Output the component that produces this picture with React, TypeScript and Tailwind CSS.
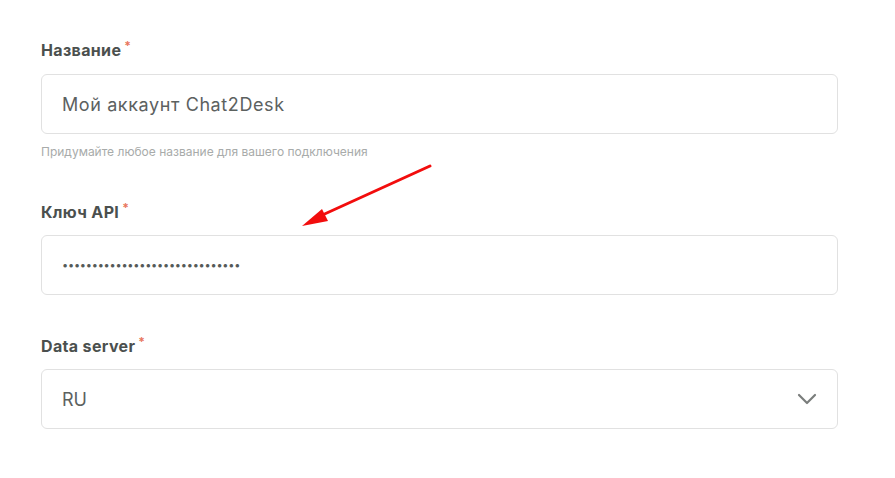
import React from 'react'

const font = { fontFamily: '"Inter", "Noto Sans", sans-serif' }

const Label = ({ children, className = '' }: { children: React.ReactNode; className?: string }) => (
  <div className={`h-6 flex items-center text-[16px] font-bold tracking-[0.35px] text-[#4b504e] ${className}`}>
    {children}
    <span className="text-[#e8765c] text-[12px] ml-[3px] -mt-2">*</span>
  </div>
)

const Field = ({ children }: { children: React.ReactNode }) => (
  <div className="h-[60px] rounded-[6px] border border-[#e1e1e1] bg-white flex items-center px-5">
    {children}
  </div>
)

const App = () => {
  return (
    <div className="relative w-[895px] h-[478px] bg-white" style={font}>
      <div className="pt-[38px] pl-[41px] w-[838px]">
        <Label className="mb-3">Название</Label>
        <Field>
          <span className="text-[18px] tracking-[0.6px] text-[#5c615f]">Мой аккаунт Chat2Desk</span>
        </Field>
        <p className="mt-[10px] h-4 text-[12px] leading-4 text-[#a8abaa]">
          Придумайте любое название для вашего подключения
        </p>
        <Label className="mt-10 mb-[11px]">Ключ API</Label>
        <Field>
          <span className="text-[11px] tracking-[-0.25px] text-[#555a58]">{'•'.repeat(30)}</span>
        </Field>
        <Label className="mt-[39px] mb-[11px]">Data server</Label>
        <Field>
          <span className="flex-1 text-[18px] text-[#5c615f]">RU</span>
          <svg width="20" height="12" viewBox="0 0 20 12">
            <path d="M2 2l8 8 8-8" fill="none" stroke="#7a7d7c" strokeWidth="2.2" strokeLinecap="round" strokeLinejoin="round" />
          </svg>
        </Field>
      </div>

      <svg className="absolute left-0 top-0 pointer-events-none" width="895" height="478">
        <line x1="430" y1="166" x2="318" y2="217" stroke="#f20d0d" strokeWidth="3" strokeLinecap="round" />
        <polygon points="302,226 322,209 328,221" fill="#f20d0d" />
      </svg>
    </div>
  )
}

export default App
